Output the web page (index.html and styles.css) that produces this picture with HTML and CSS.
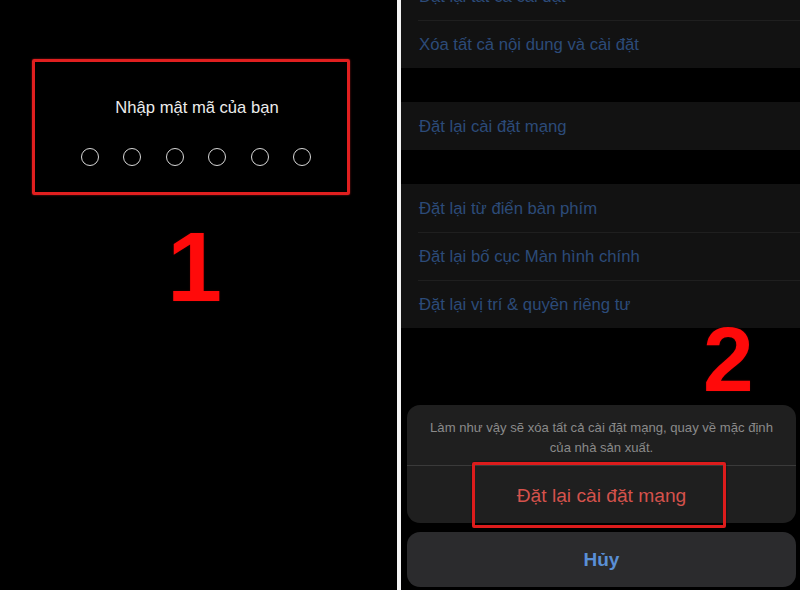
FILE: index.html
```html
<!DOCTYPE html>
<html lang="vi">
<head>
<meta charset="utf-8">
<link rel="stylesheet" href="styles.css">
</head>
<body>
<div class="screen">
  <section class="left">
    <div class="passbox">
      <div class="pass-title">Nhập mật mã của bạn</div>
      <div class="dots">
        <span class="dot"></span><span class="dot"></span><span class="dot"></span>
        <span class="dot"></span><span class="dot"></span><span class="dot"></span>
      </div>
    </div>
    <div class="step step-one">1</div>
  </section>
  <div class="divider"></div>
  <section class="right">
    <div class="group group-first">
      <div class="row">Đặt lại tất cả cài đặt</div>
      <div class="row">Xóa tất cả nội dung và cài đặt</div>
    </div>
    <div class="group">
      <div class="row">Đặt lại cài đặt mạng</div>
    </div>
    <div class="group">
      <div class="row">Đặt lại từ điển bàn phím</div>
      <div class="row">Đặt lại bố cục Màn hình chính</div>
      <div class="row">Đặt lại vị trí &amp; quyền riêng tư</div>
    </div>
    <div class="step step-two">2</div>
    <div class="sheet">
      <div class="sheet-card">
        <div class="sheet-msg">Làm như vậy sẽ xóa tất cả cài đặt mạng, quay về mặc định<br>của nhà sản xuất.</div>
        <div class="sheet-action">Đặt lại cài đặt mạng</div>
      </div>
      <div class="sheet-cancel">Hủy</div>
      <div class="highlight"></div>
    </div>
  </section>
</div>
</body>
</html>
```
FILE: styles.css
```css
html, body {
  margin: 0;
  padding: 0;
  background: #000;
}
body {
  font-family: "Liberation Sans", Arial, sans-serif;
}
.screen {
  width: 800px;
  height: 590px;
  display: flex;
  overflow: hidden;
}
.left {
  width: 397px;
  flex: none;
  background: #000;
  display: flex;
  flex-direction: column;
  align-items: flex-start;
}
.passbox {
  margin: 59px 0 0 32px;
  width: 312px;
  height: 130px;
  box-sizing: content-box;
  padding-left: 0;
  border: 3px solid #e01f1f;
  border-radius: 2px;
  display: flex;
  flex-direction: column;
  align-items: center;
  box-shadow: 0 0 2px rgba(255, 40, 40, 0.6);
}
.pass-title {
  margin-top: 36px;
  margin-left: 12px;
  font-size: 16.6px;
  color: #ececec;
  line-height: 20px;
}
.dots {
  margin-top: 30px;
  margin-left: 10px;
  display: flex;
  gap: 24.4px;
}
.dot {
  width: 16px;
  height: 16px;
  border: 1px solid #d8d8d8;
  border-radius: 50%;
}
.step {
  font-family: "Liberation Sans", Arial, sans-serif;
  font-weight: bold;
  color: #ff0a0a;
  line-height: 1;
  text-shadow: 0 0 2px #300;
}
.step-one {
  font-size: 99px;
  margin: 22px 0 0 167px;
}
.divider {
  width: 4px;
  flex: none;
  background: #f4f4f4;
}
.right {
  position: relative;
  flex: 1;
  background: #000;
  display: flex;
  flex-direction: column;
  gap: 34px;
}
.group {
  background: #121212;
}
.group-first {
  margin-top: -28px;
}
.row {
  height: 48px;
  line-height: 50px;
  padding-left: 18px;
  font-size: 16.7px;
  color: #2c4b79;
  position: relative;
}
.row + .row::before {
  content: "";
  position: absolute;
  left: 17px;
  right: 0;
  top: 0;
  height: 1px;
  background: #1f1f1f;
}
.step-two {
  position: absolute;
  left: 302px;
  top: 314px;
  font-size: 91px;
}
.sheet {
  position: absolute;
  left: 6px;
  right: 4px;
  top: 405px;
  display: flex;
  flex-direction: column;
  gap: 9px;
}
.sheet-card {
  background: #1f1f1f;
  border-radius: 13px;
  height: 118px;
  display: flex;
  flex-direction: column;
}
.sheet-msg {
  height: 61px;
  box-sizing: border-box;
  padding-top: 13px;
  text-align: center;
  font-size: 13.1px;
  line-height: 20px;
  color: #8a8a8a;
  border-bottom: 1px solid #3a3a3a;
}
.sheet-action {
  flex: 1;
  display: flex;
  align-items: center;
  justify-content: center;
  padding-top: 3px;
  font-size: 19.2px;
  color: #d5524c;
}
.sheet-cancel {
  height: 55px;
  background: #2b2b2d;
  border-radius: 13px;
  display: flex;
  align-items: center;
  justify-content: center;
  font-size: 19px;
  font-weight: bold;
  color: #5a8fd6;
}
.highlight {
  position: absolute;
  left: 65px;
  top: 57px;
  width: 248px;
  height: 60px;
  border: 3px solid #dc1c1c;
  border-radius: 2px;
  box-shadow: 0 0 2px rgba(0, 0, 0, 0.8);
}
```
